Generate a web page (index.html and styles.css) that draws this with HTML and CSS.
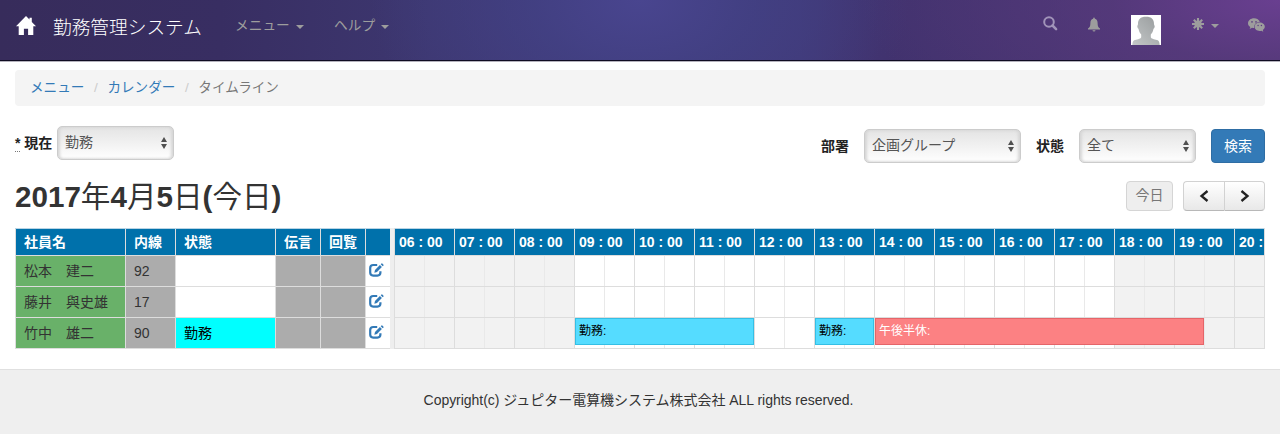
FILE: index.html
```html
<!DOCTYPE html>
<html lang="ja">
<head>
<meta charset="utf-8">
<title>勤務管理システム</title>
<link rel="stylesheet" href="styles.css">
</head>
<body>
<svg class="defs" width="0" height="0" aria-hidden="true">
  <symbol id="edit" viewBox="0 0 15 14">
    <path d="M8.200 2H4.200Q1.200 2 1.200 5V9.600Q1.200 12.600 4.200 12.600H8.400Q11.400 12.600 11.400 9.600V8.200" fill="none" stroke="currentColor" stroke-width="2.200"/>
    <path d="M5.300 9.700l.7-2.700 4.900-4.900 2 2-4.900 4.900zM11.700 1.300l.8-.8q.4-.4.800 0l1.200 1.200q.4.4 0 .8l-.8.800z" fill="currentColor"/>
  </symbol>
</svg>

<header class="navbar">
  <a class="home"><svg width="20" height="19" viewBox="0 0 20 19"><path d="M10 0L0 10.300h2.700V19h5.200v-6.200h4.200V19h5.200v-8.700H20L15.800 6V1.800h-2.300v1.800z" fill="#fff"/></svg></a>
  <a class="brand">勤務管理システム</a>
  <a class="nav-link menu">メニュー<i class="caret"></i></a>
  <a class="nav-link help">ヘルプ<i class="caret"></i></a>
  <div class="tools">
    <svg class="search" width="15" height="15" viewBox="0 0 15 15"><circle cx="6" cy="6" r="4.800" fill="none" stroke="currentColor" stroke-width="2"/><path d="M9.500 9.500l3.600 3.600" stroke="currentColor" stroke-width="2.500" stroke-linecap="round"/></svg>
    <svg class="bell" width="12" height="15" viewBox="0 0 12 15"><path d="M5.200 1.200a.8.8 0 011.600 0v.5C8.800 2.200 9.600 4 9.600 6c0 3.300.9 4.700 2.400 5.600v.9H0v-.9C1.500 10.700 2.400 9.300 2.400 6c0-2 .8-3.800 2.800-4.300zM4.500 13.200h3a1.500 1.300 0 01-3 0z" fill="currentColor"/></svg>
    <svg class="avatar" width="30" height="30" viewBox="0 0 30 30"><defs><linearGradient id="skin" x1="0" x2="1" y1="1" y2="0"><stop offset="0" stop-color="#c4c7c8"/><stop offset="1" stop-color="#979b9c"/></linearGradient></defs><rect width="30" height="30" fill="#fff"/><path d="M15 1.800c5.800 0 8 2.600 8 7.200 0 1.200.8 1.500.7 2.600-.2 1.700-.9 1.800-1.300 2.600-.5 2.700-1.500 4-2.600 5.200v2.800c.8 1.900 4.800 2.100 7 3.100 1.300.6 1.700 2.300 1.900 4.700H1.300c.2-2.400.6-4.100 1.900-4.700 2.200-1 6.200-1.200 7-3.100v-2.800C9.100 18.200 8.100 16.900 7.600 14.200c-.4-.8-1.100-.9-1.300-2.600C6.200 10.500 7 10.200 7 9c0-4.600 2.200-7.200 8-7.200z" fill="url(#skin)"/></svg>
    <div class="settings"><svg width="12" height="12" viewBox="0 0 12 12"><g stroke="currentColor" stroke-width="2.100"><path d="M6 0v12M0 6h12M1.800 1.800l8.400 8.400M10.200 1.800L1.800 10.200"/></g><circle cx="6" cy="6" r="3.600" fill="currentColor"/></svg><i class="caret"></i></div>
    <svg class="chat" width="17" height="14" viewBox="0 0 17 14"><path d="M6 .3C2.700.3 0 2.500 0 5.200c0 1.600.9 2.900 2.300 3.800l-.6 2 2.300-1.200c.7.200 1.400.3 2.200.3-.7-3.300 2-6 5.600-6C11.200 2 8.900.3 6 .3z" fill="currentColor"/><path d="M11.700 4.600c-2.900 0-5.100 1.900-5.100 4.200S8.800 13 11.700 13c.6 0 1.200-.1 1.700-.3l1.900 1-.5-1.700c1.200-.8 2-1.900 2-3.200 0-2.300-2.300-4.200-5.100-4.200z" fill="currentColor"/><g fill="#5c3d80"><circle cx="4" cy="3.900" r=".8"/><circle cx="8" cy="3.900" r=".8"/><circle cx="10.100" cy="7.500" r=".7"/><circle cx="13.400" cy="7.500" r=".7"/></g></svg>
  </div>
</header>

<main class="page">
  <nav class="breadcrumb"><a>メニュー</a><span class="sep">/</span><a>カレンダー</a><span class="sep">/</span><span class="current">タイムライン</span></nav>

  <div class="filters">
    <label class="now"><abbr>*</abbr> 現在</label>
    <div class="select current-select">勤務<i class="arrows"></i></div>
    <div class="search-form">
      <label>部署</label>
      <div class="select group-select">企画グループ<i class="arrows"></i></div>
      <label>状態</label>
      <div class="select state-select">全て<i class="arrows"></i></div>
      <button class="submit">検索</button>
    </div>
  </div>

  <div class="toolbar">
    <h2><b>2017</b>年<b>4</b>月<b>5</b>日<b>(</b>今日<b>)</b></h2>
    <button class="today">今日</button>
    <div class="pager">
      <button><svg width="10" height="12" viewBox="0 0 10 12"><path d="M8.500 1L2.500 6l6 5" fill="none" stroke="#222" stroke-width="2.300"/></svg></button>
      <button><svg width="10" height="12" viewBox="0 0 10 12"><path d="M1.500 1l6 5-6 5" fill="none" stroke="#222" stroke-width="2.300"/></svg></button>
    </div>
  </div>

  <section class="timeline">
    <div class="staff">
      <div class="row head"><span>社員名</span><span>内線</span><span>状態</span><span>伝言</span><span>回覧</span><span></span></div>
      <div class="row"><span class="name">松本　建二</span><span class="gray">92</span><span></span><span class="gray"></span><span class="gray"></span><span class="action"><svg width="15" height="14"><use href="#edit"/></svg></span></div>
      <div class="row"><span class="name">藤井　與史雄</span><span class="gray">17</span><span></span><span class="gray"></span><span class="gray"></span><span class="action"><svg width="15" height="14"><use href="#edit"/></svg></span></div>
      <div class="row"><span class="name">竹中　雄二</span><span class="gray">90</span><span class="working">勤務</span><span class="gray"></span><span class="gray"></span><span class="action"><svg width="15" height="14"><use href="#edit"/></svg></span></div>
    </div>
    <div class="divider"></div>
    <div class="hours">
      <div class="hour-head"><span>06 : 00</span><span>07 : 00</span><span>08 : 00</span><span>09 : 00</span><span>10 : 00</span><span>11 : 00</span><span>12 : 00</span><span>13 : 00</span><span>14 : 00</span><span>15 : 00</span><span>16 : 00</span><span>17 : 00</span><span>18 : 00</span><span>19 : 00</span><span class="last">20 :</span></div>
      <div class="slots"></div>
      <div class="slots"></div>
      <div class="slots events">
        <div class="event work morning">勤務:</div>
        <div class="event work noon">勤務:</div>
        <div class="event leave">午後半休:</div>
      </div>
    </div>
  </section>
</main>

<footer class="footer">Copyright(c) ジュピター電算機システム株式会社 ALL rights reserved.</footer>
</body>
</html>
```
FILE: styles.css
```css
* { box-sizing: border-box; }
html { background: #efefef; }
body {
  margin: 0;
  background: #fff;
  color: #333;
  font: 14px/20px "Liberation Sans", "Noto Sans CJK JP", sans-serif;
}
.defs { position: absolute; }
button { font: inherit; margin: 0; padding: 0; }

.navbar {
  display: flex;
  align-items: flex-start;
  height: 61px;
  padding-left: 16px;
  border-bottom: 1px solid #100c22;
  box-shadow: 0 1px 0 #b5b3bd;
  color: #9d9d9d;
  background:
    radial-gradient(ellipse 270px 180px at 640px 0, #49458f 0%, rgba(67, 66, 135, .75) 40%, rgba(64, 58, 120, 0) 100%),
    radial-gradient(ellipse 420px 160px at 1280px 0, #693f90 0%, rgba(88, 58, 126, .7) 40%, rgba(70, 50, 112, 0) 100%),
    linear-gradient(90deg, #372c5b 0, #382e62 220px, #3d3770 430px, #403876 800px, #41326e 880px, #44336e 1040px, #523873 1280px);
}
.home { display: flex; margin-top: 16px; width: 37px; }
.brand { width: 182px; margin-top: 18px; color: #fff; font-size: 18.700px; font-weight: 300; white-space: nowrap; }
.nav-link { display: flex; align-items: center; margin-top: 16px; font-size: 13.700px; }
.menu { width: 99px; }
.caret {
  margin: 1px 0 0 6px;
  border: 4px solid transparent;
  border-top-color: currentColor;
  border-bottom: 0;
}
.tools { display: flex; align-items: flex-start; margin-left: auto; padding-right: 15px; }
.search { margin: 16px 30px 0 0; color: #a194b9; }
.bell { margin: 17px 31px 0 0; }
.avatar { margin: 15px 31px 0 0; }
.settings { display: flex; align-items: center; margin: 18px 29px 0 0; }
.settings .caret { margin: 3px 0 0 7px; }
.chat { margin-top: 18px; }

.page { padding: 9px 15px 0; }
.breadcrumb {
  display: flex;
  height: 36px;
  padding: 8px 15px;
  border-radius: 4px;
  background: #f4f4f4;
  font-size: 13.600px;
}
.breadcrumb a { color: #337ab7; }
.sep { width: 23px; text-align: center; color: #ccc; }
.current { color: #777; }

.filters { display: flex; padding-top: 20px; height: 57px; }
label { color: #222; font-weight: 700; }
.now { width: 42px; margin-top: 7px; white-space: nowrap; }
.now abbr { border-bottom: 1px dotted #777; }
.select {
  display: flex;
  justify-content: space-between;
  height: 34px;
  padding: 5px 6px 0 7px;
  border: 1px solid #ccc;
  border-radius: 5px;
  color: #555;
  background: linear-gradient(#e4e4e4, #f1f1f1 50%, #fff);
  box-shadow: inset 2px 0 3px #d6d6d6, inset -2px 0 3px #d6d6d6;
}
.current-select { width: 117px; }
.group-select { width: 157px; margin: 0 15px; }
.state-select { width: 117px; margin: 0 15px; }
.arrows { display: flex; flex-direction: column; gap: 2px; margin-top: 5px; }
.arrows::before, .arrows::after { content: ""; border: 3.500px solid transparent; }
.arrows::before { border-top: 0; border-bottom: 5px solid #505050; }
.arrows::after { border-bottom: 0; border-top: 5px solid #505050; }
.search-form { display: flex; margin: 3px 0 0 auto; }
.search-form label { width: 28px; margin-top: 7px; white-space: nowrap; }
.submit {
  width: 54px;
  height: 34px;
  border: 1px solid #2e6da4;
  border-radius: 4px;
  color: #fff;
  background: #337ab7;
}

.toolbar { display: flex; height: 65px; padding-top: 18px; }
h2 {
  flex: 1;
  margin: 0;
  font-size: 29.600px;
  line-height: 32px;
  font-weight: 400;
  white-space: nowrap;
}
.today {
  width: 47px;
  height: 30px;
  padding-bottom: 2px;
  border: 1px solid #d5d5d5;
  border-radius: 4px;
  color: #777;
  background: #eee;
}
.pager { display: flex; margin-left: 10px; }
.pager button {
  display: flex;
  align-items: center;
  justify-content: center;
  width: 41px;
  height: 30px;
  border: 1px solid #d2d2d2;
  border-bottom-color: #b8b8b8;
  border-right-width: 0;
  border-radius: 4px 0 0 4px;
  background: linear-gradient(#fff, #e8e8e8);
}
.pager button + button { border-right-width: 1px; border-radius: 0 4px 4px 0; }

.timeline { display: flex; height: 121px; width: 1250px; }
.staff { width: 375px; }
.row {
  display: grid;
  grid-template-columns: 110px 50px 100px 45px 45px 25px;
  height: 31px;
}
.row span {
  padding: 5px 0 0 8px;
  border-left: 1px solid #ddd;
  border-bottom: 1px solid #ddd;
  white-space: nowrap;
}
.row.head, .hour-head {
  height: 28px;
  border-top: 1px solid #b8d4e5;
  color: #fff;
  background: #0071ab;
  font-weight: 700;
}
.row.head span { padding-top: 3px; }
.row .name { background: #69b169; }
.row .gray { background: #acacac; }
.row .working { color: #000; background: #0ff; }
.row .action { padding: 7px 0 0 3px; color: #337ab7; }
.action svg { display: block; }
.divider { width: 4px; background: #eee; }
.hours { width: 871px; border-left: 1px solid #ddd; border-right: 1px solid #ddd; overflow: hidden; }
.hour-head { display: flex; margin-left: -1px; width: 870px; }
.hour-head span {
  flex: 0 0 60px;
  height: 27px;
  padding: 3px 0 0 4px;
  border-left: 1px solid #ddd;
  border-bottom: 1px solid #ddd;
  white-space: nowrap;
}
.hour-head .last { flex-basis: 30px; }
.slots {
  height: 31px;
  border-bottom: 1px solid #ddd;
  background:
    repeating-linear-gradient(90deg, transparent 0 59px, #ddd 59px 60px),
    repeating-linear-gradient(90deg, transparent 0 29px, #e9e9e9 29px 30px, transparent 30px 60px),
    linear-gradient(90deg, #f2f2f2 180px, #fff 180px 720px, #f2f2f2 720px);
}
.events { display: flex; }
.event {
  height: 27px;
  padding: 2px 3px;
  border: 1px solid;
  font-size: 12px;
  white-space: nowrap;
}
.work { border-color: #35bfe5; color: #000; background: #55dcff; }
.leave { width: 329px; border-color: #e56569; color: #fff; background: #fc8183; }
.morning { width: 179px; margin-left: 180px; }
.noon { width: 59px; margin: 0 1px 0 61px; }

.footer {
  height: 65px;
  margin-top: 20px;
  padding: 20px 3px 0 0;
  border-top: 1px solid #e0e0e0;
  text-align: center;
  letter-spacing: -.03px;
  background: #efefef;
}
```
